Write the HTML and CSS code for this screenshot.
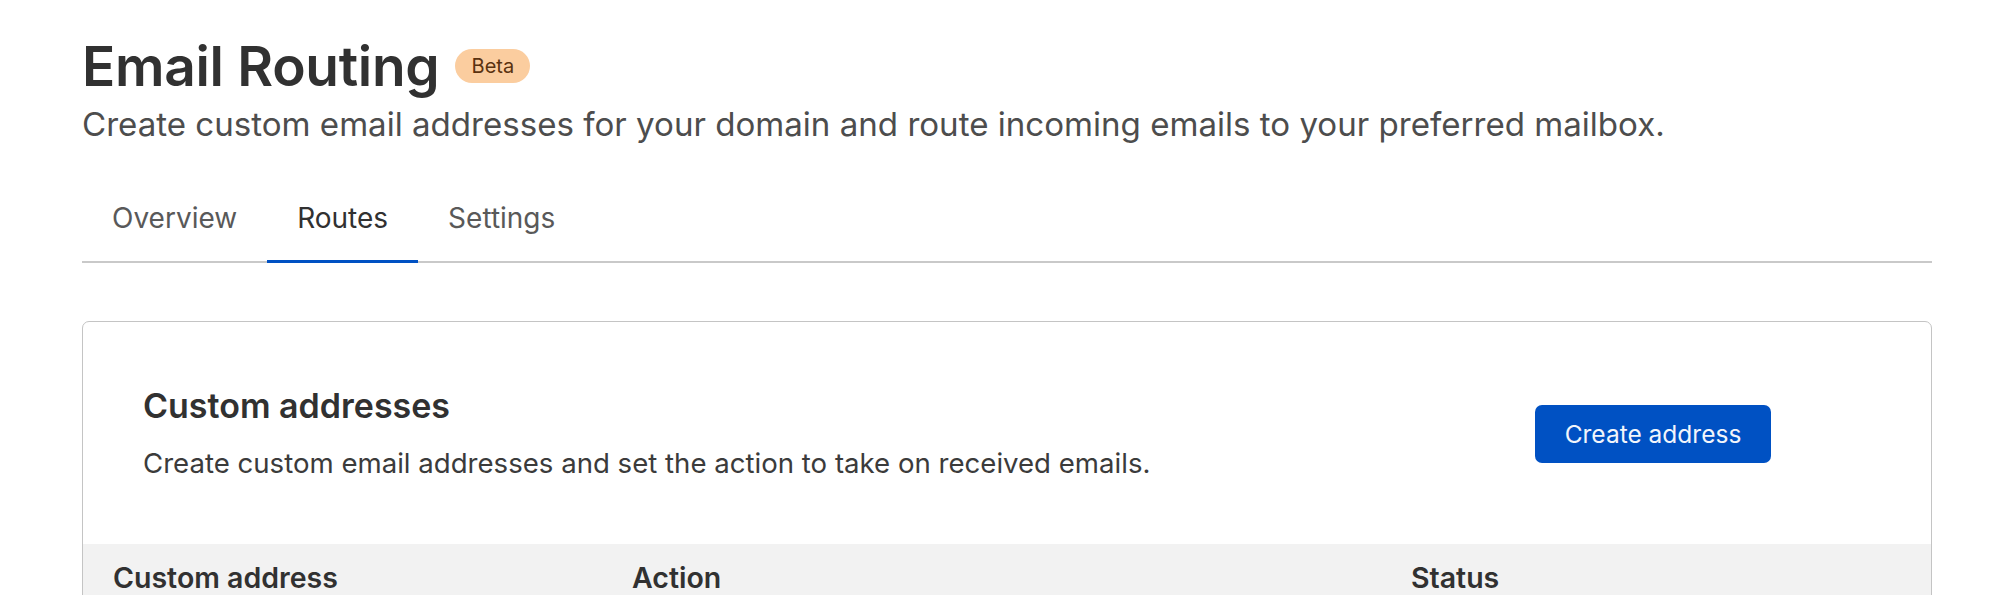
FILE: index.html
```html
<!DOCTYPE html>
<html lang="en">
<head>
<meta charset="utf-8">
<title>Email Routing</title>
<link rel="stylesheet" href="styles.css">
</head>
<body>
<main class="page">
  <header class="page-header">
    <div class="title-row">
      <h1 class="title">Email Routing</h1>
      <span class="badge">Beta</span>
    </div>
    <p class="subtitle">Create custom email addresses for your domain and route incoming emails to your preferred mailbox.</p>
  </header>
  <nav class="tabs">
    <a class="tab">Overview</a>
    <a class="tab tab-active">Routes</a>
    <a class="tab">Settings</a>
  </nav>
  <section class="card">
    <div class="card-top">
      <div class="card-text">
        <h2 class="card-title">Custom addresses</h2>
        <p class="card-desc">Create custom email addresses and set the action to take on received emails.</p>
      </div>
      <button class="btn-primary">Create address</button>
    </div>
    <div class="table-head">
      <div class="th">Custom address</div>
      <div class="th">Action</div>
      <div class="th">Status</div>
    </div>
  </section>
</main>
</body>
</html>
```
FILE: styles.css
```css
* { box-sizing: border-box; }
html, body { margin: 0; padding: 0; background: #fff; }
body {
  font-family: Inter, "Noto Sans", "Liberation Sans", sans-serif;
  color: #313131;
  overflow: hidden;
  height: 595px;
}
.page { padding: 36px 67px 0 82px; }
.title-row { display: flex; align-items: center; gap: 16px; }
.title {
  margin: 0;
  font-size: 55px;
  line-height: 60px;
  font-weight: 600;
  color: #313131;
  letter-spacing: -0.3px;
}
.badge {
  display: inline-flex;
  align-items: center;
  justify-content: center;
  height: 34px;
  width: 75px;
  border-radius: 17px;
  background: #fbcd9f;
  color: #5a3210;
  font-size: 20px;
}
.subtitle {
  margin: 8px 0 0;
  font-size: 33.1px;
  line-height: 40px;
  color: #4d4d4d;
}
.tabs {
  display: flex;
  margin-top: 36px;
  border-bottom: 2px solid #c9c9c9;
}
.tab {
  padding: 20px 30px 24px;
  font-size: 28px;
  line-height: 36px;
  color: #595959;
  border-bottom: 3px solid transparent;
  margin-bottom: -2px;
}
.tab-active { color: #313131; border-bottom-color: #0051c3; }
.card {
  margin-top: 58px;
  border: 1px solid #c4c4c4;
  border-radius: 7px;
  overflow: hidden;
}
.card-top {
  display: flex;
  align-items: center;
  justify-content: space-between;
  padding: 64px 160px 63px 60px;
}
.card-title {
  margin: 0;
  font-size: 34px;
  line-height: 40px;
  font-weight: 600;
  color: #313131;
}
.card-desc {
  margin: 19px 0 0;
  font-size: 27.6px;
  line-height: 36px;
  color: #3b3b3b;
}
.btn-primary {
  height: 58px;
  width: 236px;
  border: none;
  border-radius: 7px;
  background: #0051c3;
  color: #f2f5fb;
  font-family: inherit;
  font-size: 24.5px;
}
.table-head {
  display: grid;
  grid-template-columns: 519px 779px 1fr;
  background: #f2f2f2;
  padding: 16px 0 20px;
}
.th {
  padding-left: 30px;
  font-size: 28.5px;
  line-height: 36px;
  font-weight: 600;
  color: #313131;
}
```
